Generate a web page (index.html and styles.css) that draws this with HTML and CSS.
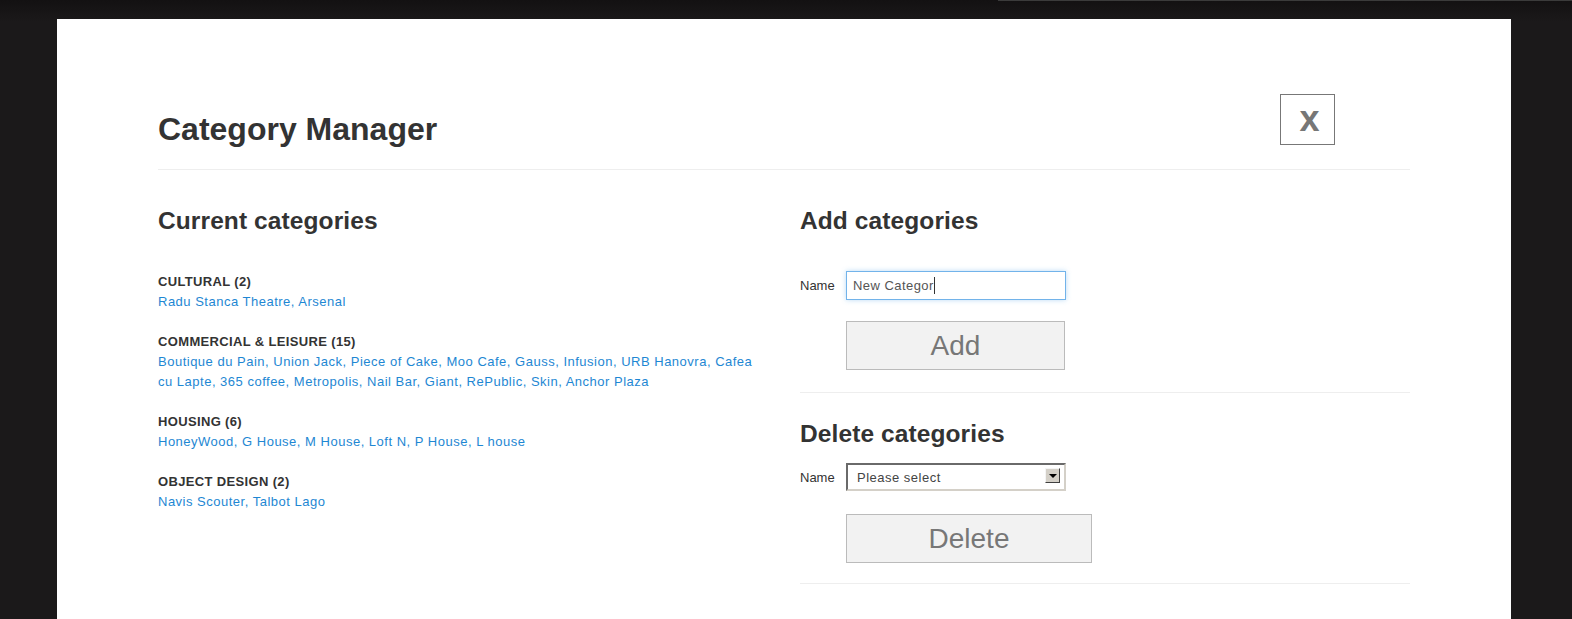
FILE: index.html
```html
<!DOCTYPE html>
<html lang="en">
<head>
<meta charset="utf-8">
<title>Category Manager</title>
<link rel="stylesheet" href="styles.css">
</head>
<body>
<div class="topline"></div>
<div class="panel">
  <header class="head">
    <h1 class="title">Category Manager</h1>
    <button class="close" type="button">x</button>
  </header>
  <hr class="rule">
  <div class="cols">
    <section class="current">
      <h2 class="h2">Current categories</h2>
      <div class="groups">
        <div class="group">
          <div class="gname">CULTURAL (2)</div>
          <div class="glinks"><a>Radu Stanca Theatre</a>, <a>Arsenal</a></div>
        </div>
        <div class="group">
          <div class="gname">COMMERCIAL &amp; LEISURE (15)</div>
          <div class="glinks"><a>Boutique du Pain</a>, <a>Union Jack</a>, <a>Piece of Cake</a>, <a>Moo Cafe</a>, <a>Gauss</a>, <a>Infusion</a>, <a>URB Hanovra</a>, <a>Cafea cu Lapte</a>, <a>365 coffee</a>, <a>Metropolis</a>, <a>Nail Bar</a>, <a>Giant</a>, <a>RePublic</a>, <a>Skin</a>, <a>Anchor Plaza</a></div>
        </div>
        <div class="group">
          <div class="gname">HOUSING (6)</div>
          <div class="glinks"><a>HoneyWood</a>, <a>G House</a>, <a>M House</a>, <a>Loft N</a>, <a>P House</a>, <a>L house</a></div>
        </div>
        <div class="group">
          <div class="gname">OBJECT DESIGN (2)</div>
          <div class="glinks"><a>Navis Scouter</a>, <a>Talbot Lago</a></div>
        </div>
      </div>
    </section>
    <section class="side">
      <h2 class="h2">Add categories</h2>
      <div class="row row-add">
        <label class="lbl">Name</label>
        <div class="field">
          <input class="txt" type="text" value="New Categor">
          <span class="caret"></span>
        </div>
      </div>
      <button class="btn btn-add" type="button">Add</button>
      <hr class="rule rule-side">
      <h2 class="h2 h2-del">Delete categories</h2>
      <div class="row row-del">
        <label class="lbl">Name</label>
        <div class="sel">
          <select class="select">
            <option>Please select</option>
          </select>
          <span class="arrow"><span class="tri"></span></span>
        </div>
      </div>
      <button class="btn btn-del" type="button">Delete</button>
      <hr class="rule rule-side rule-end">
    </section>
  </div>
</div>
</body>
</html>
```

FILE: styles.css
```css
html, body {
  margin: 0;
  padding: 0;
}

body {
  background: #1b191a linear-gradient(#131112 0, #1b191a 22px) no-repeat;
  font-family: "Liberation Sans", Arial, sans-serif;
  color: #333;
  overflow: hidden;
}

.topline {
  height: 1px;
  margin-left: 998px;
  background: #3b3b3b;
}

.panel {
  margin: 18px 0 0 57px;
  width: 1454px;
  min-height: 620px;
  box-sizing: border-box;
  padding: 75px 101px 0;
  background: #fff;
}

.head {
  display: flex;
  justify-content: space-between;
  align-items: flex-start;
}

.title {
  margin: 17px 0 0;
  font-size: 32px;
  line-height: 36px;
  font-weight: bold;
  color: #333;
}

.close {
  width: 55px;
  height: 51px;
  box-sizing: border-box;
  margin: 0 75px 0 0;
  padding: 0 0 2px 4px;
  border: 1px solid #777;
  background: #fff;
  color: #777;
  font-family: "Liberation Sans", Arial, sans-serif;
  font-weight: bold;
  font-size: 36px;
  line-height: 36px;
}

.rule {
  display: block;
  height: 0;
  border: 0;
  border-top: 1px solid #eee;
  margin: 22px 0 0;
}

.cols {
  display: grid;
  grid-template-columns: 642px 1fr;
  padding-top: 36px;
}

.h2 {
  margin: 0;
  font-size: 24.5px;
  line-height: 30px;
  font-weight: bold;
  letter-spacing: 0.1px;
  color: #333;
}

.current {
  padding-right: 36px;
}

.groups {
  margin-top: 36px;
}

.group + .group {
  margin-top: 20px;
}

.gname {
  font-size: 13px;
  line-height: 20px;
  font-weight: bold;
  letter-spacing: 0.35px;
  color: #333;
}

.glinks {
  font-size: 13px;
  line-height: 20px;
  letter-spacing: 0.5px;
  color: #1e87d3;
}

.glinks a {
  color: #1e87d3;
  text-decoration: none;
}

.row {
  display: flex;
  align-items: center;
}

.row-add {
  margin-top: 35px;
}

.lbl {
  width: 46px;
  font-size: 13px;
  color: #333;
}

.field {
  position: relative;
}

.txt {
  display: block;
  width: 220px;
  height: 29px;
  box-sizing: border-box;
  margin: 0;
  padding: 0 6px;
  border: 1px solid #72b3ea;
  box-shadow: 0 0 5px rgba(102, 175, 233, 0.45);
  outline: none;
  font-family: "Liberation Sans", Arial, sans-serif;
  font-size: 13px;
  letter-spacing: 0.45px;
  color: #555;
  background: #fff;
}

.caret {
  position: absolute;
  left: 88px;
  top: 6px;
  width: 1px;
  height: 17px;
  background: #333;
}

.btn {
  display: block;
  height: 49px;
  box-sizing: border-box;
  margin-left: 46px;
  padding: 0;
  border: 1px solid #bbb;
  background: #f2f2f2;
  color: #777;
  font-family: "Liberation Sans", Arial, sans-serif;
  font-size: 28px;
}

.btn-add {
  width: 219px;
  margin-top: 21px;
}

.rule-side {
  margin-top: 22px;
}

.h2-del {
  margin-top: 26px;
}

.row-del {
  margin-top: 14px;
}

.sel {
  position: relative;
}

.select {
  display: block;
  width: 220px;
  height: 28px;
  box-sizing: border-box;
  margin: 0;
  padding: 0 0 0 9px;
  border: 2px solid;
  border-color: #6a6a6a #d4d0c8 #d4d0c8 #6a6a6a;
  border-radius: 0;
  background: #fff;
  -webkit-appearance: none;
  appearance: none;
  outline: none;
  font-family: "Liberation Sans", Arial, sans-serif;
  font-size: 13px;
  letter-spacing: 0.5px;
  color: #444;
}

.arrow {
  position: absolute;
  right: 6px;
  top: 5px;
  width: 15px;
  height: 15px;
  box-sizing: border-box;
  border: 1px solid;
  border-color: #f4f4f4 #404040 #404040 #f4f4f4;
  background: #d4d0c8;
  display: flex;
  align-items: center;
  justify-content: center;
}

.tri {
  width: 0;
  height: 0;
  border-left: 4px solid transparent;
  border-right: 4px solid transparent;
  border-top: 4px solid #000;
  margin-top: 1px;
}

.btn-del {
  width: 246px;
  margin-top: 23px;
}

.rule-end {
  margin-top: 20px;
}
```
